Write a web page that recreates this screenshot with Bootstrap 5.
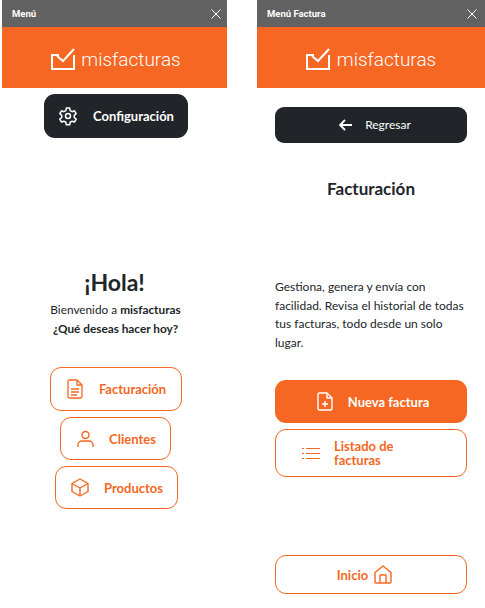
<!DOCTYPE html>
<html lang="es">
<head>
  <meta charset="UTF-8">
  <title>misfacturas</title>
  <meta name="viewport" content="width=device-width, initial-scale=1.0">
  <link href="https://cdn.jsdelivr.net/npm/bootstrap@5.3.3/dist/css/bootstrap.min.css" rel="stylesheet">
  <style>
    body {
      margin: 0;
      width: 485px;
      height: 608px;
      overflow: hidden;
      background: #fff;
      color: #212529;
      font-family: "Lato", "Noto Sans", sans-serif;
    }
    .panes { padding-left: 2px; gap: 30px; }
    .pane { height: 608px; }
    .pane-left { width: 225px; }
    .pane-right { width: 228px; }
    .bar-top {
      height: 27px;
      background: #626262;
      color: #fff;
      padding: 0 5px 0 10px;
      font: 700 9.5px "Roboto", sans-serif;
    }
    .pane-right .bar-top { padding-right: 7px; }
    .bar-logo { height: 61px; background: #f56723; color: #fff; gap: 7px; padding-top: 3px; }
    .pane-left .bar-logo { gap: 6px; padding-left: 3px; }
    .logo-word {
      font: 300 19px "Roboto", sans-serif;
      line-height: 1;
    }
    .btn-mf {
      border-radius: 11px;
      font-weight: 700;
      font-size: 13px;
      line-height: 14px;
      padding: 0;
    }
    .btn-line { border: 1px solid #f56723; color: #f56723; background: #fff; }
    .btn-full { border: 0; background: #f56723; color: #fff; }
    .btn-dark-mf { border: 0; background: #212529; color: #fff; }
    .btn-config { width: 144px; height: 44px; margin: 6px 0 0 42px; gap: 15px; }
    .hello { margin: 130px 0 0; font-size: 23px; font-weight: 700; line-height: 28px; }
    .hello-sub { margin: 5px 0 0; font-size: 11.8px; line-height: 18.5px; padding-left: 2px; }
    .menu-stack { margin-top: 29px; gap: 6px; padding-left: 2px; }
    .btn-fact { width: 132px; height: 44px; gap: 16px; padding-left: 2px; }
    .btn-client { width: 111px; height: 43px; gap: 15px; padding-left: 2px; }
    .btn-prod { width: 123px; height: 43px; gap: 15px; margin-left: 1px; padding-left: 2px; }
    .pane-body { padding: 0 18px; }
    .btn-back { width: 192px; height: 36px; margin-top: 19px; gap: 12px; padding-left: 8px; font-weight: 400; font-size: 12px; border-radius: 9px; }
    .bill-title { margin: 36px 0 0; font-size: 17px; font-weight: 700; line-height: 20px; }
    .bill-text { margin: 79px 0 0; font-size: 12px; line-height: 18.5px; }
    .btn-new { width: 192px; height: 43px; margin-top: 28px; gap: 15px; padding-left: 4px; }
    .btn-list { width: 192px; height: 48px; margin-top: 6px; gap: 14px; padding-left: 26px; text-align: left; }
    .btn-home { width: 192px; height: 39px; margin-top: 78px; gap: 6px; padding-right: 13px; }
  </style>
</head>
<body>
  <div class="panes d-flex">

    <!-- Menu principal -->
    <div class="pane pane-left">
      <div class="bar-top d-flex align-items-center justify-content-between">
        <span>Menú</span>
        <svg width="12" height="12" viewBox="0 0 12 12" fill="none" stroke="#fff" stroke-width="1"><path d="M1.500 1.500l9 9M10.500 1.500l-9 9"/></svg>
      </div>
      <div class="bar-logo d-flex align-items-center justify-content-center">
        <svg width="24" height="22" viewBox="0 0 24 22" fill="none" stroke="#fff" stroke-width="2"><path d="M8 7H1v14h22V7"/><path d="M6 8l6 5L23 1"/></svg>
        <span class="logo-word">misfacturas</span>
      </div>
      <button class="btn btn-mf btn-dark-mf btn-config d-flex align-items-center justify-content-center">
        <svg width="20" height="20" viewBox="0 0 24 24" fill="none" stroke="#fff" stroke-width="1.8" stroke-linejoin="round"><circle cx="12" cy="12" r="3"/><path d="M10 2.500h4l.6 3 2.300 1.300 2.900-1 2 3.400-2.300 2v2.600l2.300 2-2 3.400-2.900-1-2.300 1.300-.6 3h-4l-.6-3-2.300-1.300-2.900 1-2-3.400 2.300-2v-2.600l-2.300-2 2-3.400 2.900 1 2.300-1.300z"/></svg>
        <span>Configuración</span>
      </button>
      <div class="text-center">
        <h1 class="hello">¡Hola!</h1>
        <p class="hello-sub">Bienvenido a <strong>misfacturas</strong><br><strong>¿Qué deseas hacer hoy?</strong></p>
      </div>
      <div class="menu-stack d-flex flex-column align-items-center">
        <button class="btn btn-mf btn-line btn-fact d-flex align-items-center justify-content-center">
          <svg width="16" height="20" viewBox="0 0 16 20" fill="none" stroke="#f56723" stroke-width="1.3" stroke-linejoin="round"><path d="M2.500 1H10l5 5v11.500A1.500 1.500 0 0 1 13.500 19h-11A1.500 1.500 0 0 1 1 17.500v-15A1.500 1.500 0 0 1 2.500 1z"/><path d="M10 1v5h5M4 10h8M4 13h8M4 16h6"/></svg>
          <span>Facturación</span>
        </button>
        <button class="btn btn-mf btn-line btn-client d-flex align-items-center justify-content-center">
          <svg width="17" height="18" viewBox="0 0 17 18" fill="none" stroke="#f56723" stroke-width="1.4"><circle cx="8.500" cy="5" r="3.500"/><path d="M1 17v-2a4 4 0 0 1 4-4h7a4 4 0 0 1 4 4v2"/></svg>
          <span>Clientes</span>
        </button>
        <button class="btn btn-mf btn-line btn-prod d-flex align-items-center justify-content-center">
          <svg width="18" height="19" viewBox="0 0 18 19" fill="none" stroke="#f56723" stroke-width="1.4" stroke-linejoin="round"><path d="M9 1l8 4.500v8L9 18l-8-4.500v-8z"/><path d="M1 5.500l8 4.500 8-4.500M9 10v8"/></svg>
          <span>Productos</span>
        </button>
      </div>
    </div>

    <!-- Menu factura -->
    <div class="pane pane-right">
      <div class="bar-top d-flex align-items-center justify-content-between">
        <span>Menú Factura</span>
        <svg width="12" height="12" viewBox="0 0 12 12" fill="none" stroke="#fff" stroke-width="1"><path d="M1.500 1.500l9 9M10.500 1.500l-9 9"/></svg>
      </div>
      <div class="bar-logo d-flex align-items-center justify-content-center">
        <svg width="24" height="22" viewBox="0 0 24 22" fill="none" stroke="#fff" stroke-width="2"><path d="M8 7H1v14h22V7"/><path d="M6 8l6 5L23 1"/></svg>
        <span class="logo-word">misfacturas</span>
      </div>
      <div class="pane-body">
        <button class="btn btn-mf btn-dark-mf btn-back d-flex align-items-center justify-content-center">
          <svg width="14" height="12" viewBox="0 0 14 12" fill="none" stroke="#fff" stroke-width="1.800"><path d="M13 6H1.500M6 1L1 6l5 5"/></svg>
          <span>Regresar</span>
        </button>
        <h2 class="bill-title text-center">Facturación</h2>
        <p class="bill-text">Gestiona, genera y envía con facilidad. Revisa el historial de todas tus facturas, todo desde un solo lugar.</p>
        <button class="btn btn-mf btn-full btn-new d-flex align-items-center justify-content-center">
          <svg width="16" height="19" viewBox="0 0 16 19" fill="none" stroke="#fff" stroke-width="1.4" stroke-linejoin="round"><path d="M2.500 1H10l5 5v10.500a1.500 1.500 0 0 1-1.500 1.500h-11A1.500 1.500 0 0 1 1 16.500v-14A1.500 1.500 0 0 1 2.500 1z"/><path d="M10 1v5h5M8 9v6M5 12h6"/></svg>
          <span>Nueva factura</span>
        </button>
        <button class="btn btn-mf btn-line btn-list d-flex align-items-center">
          <svg width="18" height="13" viewBox="0 0 18 13" fill="none" stroke="#f56723" stroke-width="1.200"><path d="M4 1.500h14M4 6.500h14M4 11.500h14M0 1.500h2M0 6.500h2M0 11.500h2"/></svg>
          <span>Listado de<br>facturas</span>
        </button>
        <button class="btn btn-mf btn-line btn-home d-flex align-items-center justify-content-center">
          <span>Inicio</span>
          <svg width="18" height="19" viewBox="0 0 18 19" fill="none" stroke="#f56723" stroke-width="1.400" stroke-linejoin="round"><path d="M1 7.500L9 1l8 6.500V17a1 1 0 0 1-1 1H2a1 1 0 0 1-1-1z"/><path d="M6 18v-8h6v8"/></svg>
        </button>
      </div>
    </div>

  </div>
</body>
</html>
